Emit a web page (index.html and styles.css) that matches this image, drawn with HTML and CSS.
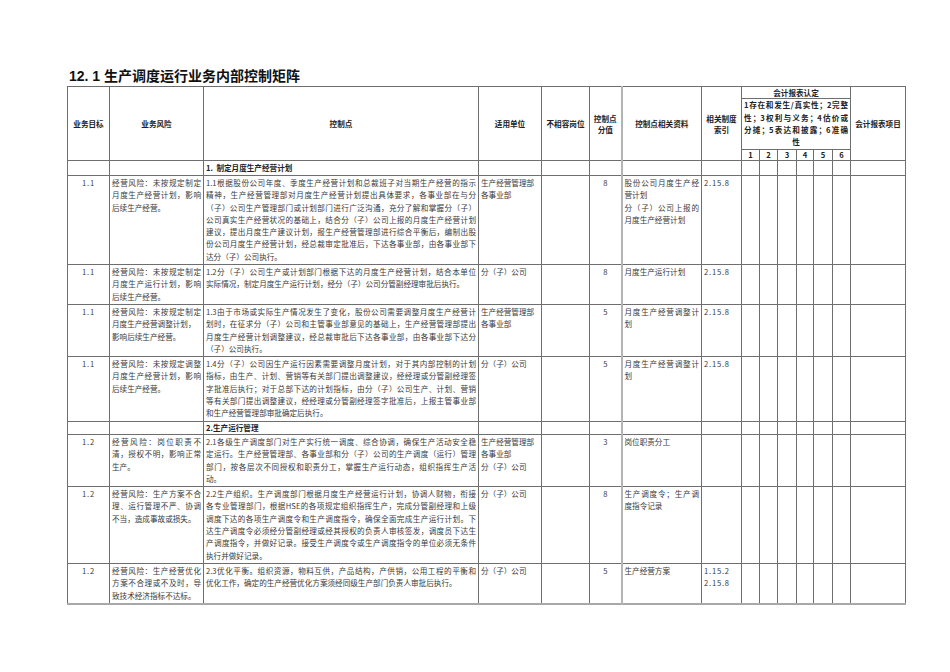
FILE: index.html
```html
<!DOCTYPE html>
<html lang="zh-CN">
<head>
<meta charset="utf-8">
<title>12.1 生产调度运行业务内部控制矩阵</title>
<link rel="stylesheet" href="styles.css">
</head>
<body>
<div class="page">
  <h1 class="title">12. 1 生产调度运行业务内部控制矩阵</h1>
  <table class="matrix">
    <colgroup>
      <col class="c-goal"><col class="c-risk"><col class="c-ctrl"><col class="c-unit"><col class="c-incompat">
      <col class="c-score"><col class="c-docs"><col class="c-index">
      <col class="c-n1"><col class="c-n2"><col class="c-n3"><col class="c-n4"><col class="c-n5"><col class="c-n6">
      <col class="c-item">
    </colgroup>
    <thead>
      <tr class="h1">
        <th rowspan="3">业务目标</th>
        <th rowspan="3">业务风险</th>
        <th rowspan="3">控制点</th>
        <th rowspan="3">适用单位</th>
        <th rowspan="3">不相容岗位</th>
        <th rowspan="3">控制点<br>分值</th>
        <th rowspan="3" class="docs">控制点相关资料</th>
        <th rowspan="3">相关制度<br>索引</th>
        <th colspan="6">会计报表认定</th>
        <th rowspan="3">会计报表项目</th>
      </tr>
      <tr class="h2">
        <th colspan="6" class="desc"><span class="j">1存在和发生/真实性；2完整</span><span class="j">性；3权利与义务；4估价或</span><span class="j">分摊；5表达和披露；6准确</span><span class="c">性</span></th>
      </tr>
      <tr class="h3">
        <th class="num">1</th><th class="num">2</th><th class="num">3</th><th class="num">4</th><th class="num">5</th><th class="num">6</th>
      </tr>
    </thead>
    <tbody>
      <tr class="section s1">
        <td></td><td></td><td class="sec">1.&nbsp; 制定月度生产经营计划</td><td></td><td></td><td></td><td class="docs"></td><td></td>
        <td></td><td></td><td></td><td></td><td></td><td></td><td></td>
      </tr>
      <tr>
        <td class="goal">1.1</td>
        <td><span class="j">经营风险：未按规定制定</span><span class="j">月度生产经营计划，影响</span>后续生产经营。</td>
        <td><span class="j">1.1根据股份公司年度、季度生产经营计划和总裁班子对当期生产经营的指示</span><span class="j">精神，生产经营管理部对月度生产经营计划提出具体要求，各事业部在与分</span><span class="j">（子）公司生产管理部门或计划部门进行广泛沟通，充分了解和掌握分（子）</span><span class="j">公司真实生产经营状况的基础上，结合分（子）公司上报的月度生产经营计划</span><span class="j">建议，提出月度生产建议计划，报生产经营管理部进行综合平衡后，编制出股</span><span class="j">份公司月度生产经营计划，经总裁审定批准后，下达各事业部，由各事业部下</span>达分（子）公司执行。</td>
        <td>生产经营管理部<br>各事业部</td>
        <td></td>
        <td class="score">8</td>
        <td class="docs"><span class="j">股份公司月度生产经</span>营计划<br><span class="j">分（子）公司上报的</span>月度生产经营计划</td>
        <td class="idx">2.15.8</td>
        <td></td><td></td><td></td><td></td><td></td><td></td><td></td>
      </tr>
      <tr>
        <td class="goal">1.1</td>
        <td><span class="j">经营风险：未按规定制定</span><span class="j">月度生产运行计划，影响</span>后续生产经营。</td>
        <td><span class="j">1.2分（子）公司生产或计划部门根据下达的月度生产经营计划，结合本单位</span>实际情况，制定月度生产运行计划，经分（子）公司分管副经理审批后执行。</td>
        <td>分（子）公司</td>
        <td></td>
        <td class="score">8</td>
        <td class="docs">月度生产运行计划</td>
        <td class="idx">2.15.8</td>
        <td></td><td></td><td></td><td></td><td></td><td></td><td></td>
      </tr>
      <tr>
        <td class="goal">1.1</td>
        <td><span class="j">经营风险：未按规定制定</span>月度生产经营调整计划，<br>影响后续生产经营。</td>
        <td><span class="j">1.3由于市场或实际生产情况发生了变化，股份公司需要调整月度生产经营计</span><span class="j">划时，在征求分（子）公司和主管事业部意见的基础上，生产经营管理部提出</span><span class="j">月度生产经营计划调整建议，经总裁审批后下达各事业部，由各事业部下达分</span>（子）公司执行。</td>
        <td>生产经营管理部<br>各事业部</td>
        <td></td>
        <td class="score">5</td>
        <td class="docs"><span class="j">月度生产经营调整计</span>划</td>
        <td class="idx">2.15.8</td>
        <td></td><td></td><td></td><td></td><td></td><td></td><td></td>
      </tr>
      <tr>
        <td class="goal">1.1</td>
        <td><span class="j">经营风险：未按规定调整</span><span class="j">月度生产经营计划，影响</span>后续生产经营。</td>
        <td><span class="j">1.4分（子）公司因生产运行因素需要调整月度计划，对于其内部控制的计划</span><span class="j">指标，由生产、计划、营销等有关部门提出调整建议，经经理或分管副经理签</span><span class="j">字批准后执行；对于总部下达的计划指标，由分（子）公司生产、计划、营销</span><span class="j">等有关部门提出调整建议，经经理或分管副经理签字批准后，上报主管事业部</span>和生产经营管理部审批确定后执行。</td>
        <td>分（子）公司</td>
        <td></td>
        <td class="score">5</td>
        <td class="docs"><span class="j">月度生产经营调整计</span>划</td>
        <td class="idx">2.15.8</td>
        <td></td><td></td><td></td><td></td><td></td><td></td><td></td>
      </tr>
      <tr class="section s2">
        <td></td><td></td><td class="sec">2.生产运行管理</td><td></td><td></td><td></td><td class="docs"></td><td></td>
        <td></td><td></td><td></td><td></td><td></td><td></td><td></td>
      </tr>
      <tr>
        <td class="goal">1.2</td>
        <td><span class="j">经营风险：岗位职责不</span><span class="j">清，授权不明，影响正常</span>生产。</td>
        <td><span class="j">2.1各级生产调度部门对生产实行统一调度、综合协调，确保生产活动安全稳</span><span class="j">定运行。生产经营管理部、各事业部和分（子）公司的生产调度（运行）管理</span><span class="j">部门，按各层次不同授权和职责分工，掌握生产运行动态，组织指挥生产活</span>动。</td>
        <td>生产经营管理部<br>各事业部<br>分（子）公司</td>
        <td></td>
        <td class="score">3</td>
        <td class="docs">岗位职责分工</td>
        <td class="idx"></td>
        <td></td><td></td><td></td><td></td><td></td><td></td><td></td>
      </tr>
      <tr>
        <td class="goal">1.2</td>
        <td><span class="j">经营风险：生产方案不合</span><span class="j">理、运行管理不严、协调</span>不当，造成事故或损失。</td>
        <td><span class="j">2.2生产组织。生产调度部门根据月度生产经营运行计划，协调人财物，衔接</span><span class="j">各专业管理部门，根据HSE的各项规定组织指挥生产，完成分管副经理和上级</span><span class="j">调度下达的各项生产调度令和生产调度指令，确保全面完成生产运行计划。下</span><span class="j">达生产调度令必须经分管副经理或经其授权的负责人审核签发，调度员下达生</span><span class="j">产调度指令，并做好记录。接受生产调度令或生产调度指令的单位必须无条件</span>执行并做好记录。</td>
        <td>分（子）公司</td>
        <td></td>
        <td class="score">8</td>
        <td class="docs"><span class="j">生产调度令；生产调</span>度指令记录</td>
        <td class="idx"></td>
        <td></td><td></td><td></td><td></td><td></td><td></td><td></td>
      </tr>
      <tr class="last-row">
        <td class="goal">1.2</td>
        <td><span class="j">经营风险：生产经营优化</span><span class="j">方案不合理或不及时，导</span>致技术经济指标不达标。</td>
        <td><span class="j">2.3优化平衡。组织资源，物料互供，产品结构，产供销，公用工程的平衡和</span>优化工作，确定的生产经营优化方案须经同级生产部门负责人审批后执行。</td>
        <td>分（子）公司</td>
        <td></td>
        <td class="score">5</td>
        <td class="docs">生产经营方案</td>
        <td class="idx">1.15.2<br>2.15.8</td>
        <td></td><td></td><td></td><td></td><td></td><td></td><td></td>
      </tr>
    </tbody>
  </table>
</div>
</body>
</html>
```

FILE: styles.css
```css
html, body {
  margin: 0;
  padding: 0;
  background: #ffffff;
}

body {
  font-family: "Noto Sans CJK SC", "Liberation Sans", sans-serif;
  color: #3a3a3a;
}

.page {
  padding: 66px 0 40px 67px;
}

.title {
  margin: 0 0 0 2px;
  font-family: "Liberation Sans", "Noto Sans CJK SC", sans-serif;
  font-size: 14px;
  line-height: 20px;
  font-weight: bold;
  color: #111111;
}

.matrix {
  border-collapse: collapse;
  table-layout: fixed;
  width: 838px;
  font-size: 7.6px;
  line-height: 12.3px;
  border-bottom: 2px solid #a8a8a8;
}

.c-goal { width: 42px; }
.c-risk { width: 94px; }
.c-ctrl { width: 275px; }
.c-unit { width: 63px; }
.c-incompat { width: 48px; }
.c-score { width: 32px; }
.c-docs { width: 80px; }
.c-index { width: 40px; }
.c-n1, .c-n2, .c-n6 { width: 18px; }
.c-n3, .c-n5 { width: 19px; }
.c-n4 { width: 17px; }
.c-item { width: 55px; }

.matrix th,
.matrix td {
  border: 1px solid #6e6e6e;
  padding: 1px 2px;
  vertical-align: top;
  text-align: left;
  overflow: hidden;
}

.matrix th {
  font-weight: bold;
  color: #222222;
  vertical-align: middle;
  text-align: center;
  line-height: 12.3px;
}

.matrix .docs {
  border-left: 2px solid #b4b4b4;
}

.h1 { height: 11px; }
.h1 th { padding-top: 0; padding-bottom: 0; line-height: 11px; }
.h2 { height: 51px; }
.h2 th { padding-top: 0; padding-bottom: 0; }
.h3 { height: 11px; }
.h3 th { padding: 0; line-height: 10px; }

.desc .j,
.matrix td .j {
  display: block;
  text-align: justify;
  text-align-last: justify;
}

.desc .c {
  display: block;
  text-align: center;
}

.num {
  font-weight: bold;
}

.section td {
  vertical-align: middle;
}

.s1 { height: 15px; }
.s1 td { padding-top: 0; padding-bottom: 0; }
.s2 { height: 13px; }
.s2 td { padding-top: 0; padding-bottom: 0; }

.matrix td.sec {
  font-weight: bold;
  color: #222222;
}

.matrix td.goal {
  text-align: center;
  letter-spacing: 0.8px;
}

.matrix td.score {
  text-align: center;
}

.matrix td.idx {
  letter-spacing: 0.8px;
}
```
